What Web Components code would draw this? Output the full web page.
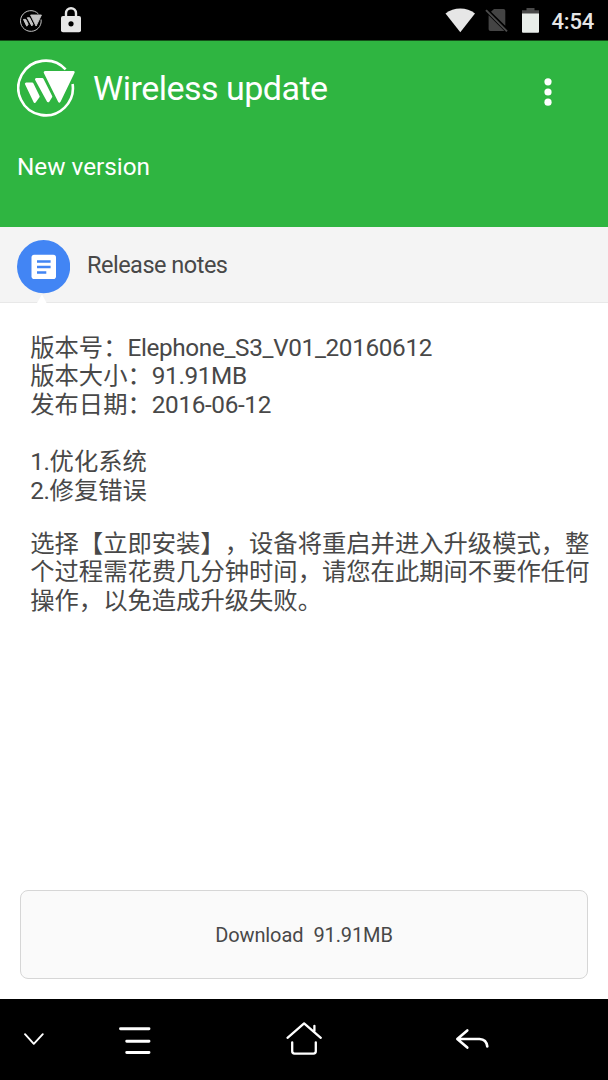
<!DOCTYPE html>
<html lang="en">
<head>
<meta charset="utf-8">
<title>Wireless update</title>
<style>
  html, body {
    margin: 0;
    height: 100%;
  }

  body {
    font-family: Roboto, "Noto Sans CJK SC", sans-serif;
    color: #484848;
    background: #fff;
    overflow: hidden;
  }

  .latin {
    letter-spacing: -0.35px;
  }
</style>
</head>
<body>
<update-screen>
  <status-bar slot="top" time="4:54"></status-bar>
  <app-header slot="top" title="Wireless update" subtitle="New version"></app-header>
  <section-header slot="top">Release notes</section-header>
  <release-notes>
    <p>版本号：<span class="latin">Elephone_S3_V01_20160612</span><br>版本大小：<span class="latin">91.91MB</span><br>发布日期：<span class="latin">2016-06-12</span><br><br><span class="latin">1.</span>优化系统<br><span class="latin">2.</span>修复错误</p>
    <p>选择【立即安装】，设备将重启并进入升级模式，整个过程需花费几分钟时间，请您在此期间不要作任何操作，以免造成升级失败。</p>
  </release-notes>
  <download-button slot="bottom" size="91.91MB">Download</download-button>
  <nav-bar slot="bottom"></nav-bar>
</update-screen>

<script>
const LOGO = `
  <path d="M48.6 10.4A27.3 27.3 0 1 0 55.6 25" fill="none" stroke="currentColor" stroke-width="2.6"/>
  <g fill="currentColor" stroke="currentColor" stroke-width="2.6" stroke-linejoin="round">
    <path d="M28 13.3H56.4L42.4 42.3Z"/>
    <path d="M19.3 20.4H25.3L34 37.6L31.2 42Z"/>
    <path d="M9.2 24.8H15.2L21.4 37.6L17.8 42.6Z"/>
  </g>`;

class UpdateScreen extends HTMLElement {
  constructor() {
    super();
    this.attachShadow({ mode: 'open' }).innerHTML = `
      <style>
        :host {
          display: flex;
          flex-direction: column;
          height: 1080px;
        }

        main {
          flex: 1;
          min-height: 0;
        }
      </style>
      <slot name="top"></slot>
      <main><slot></slot></main>
      <slot name="bottom"></slot>
    `;
  }
}

class StatusBar extends HTMLElement {
  constructor() {
    super();
    this.attachShadow({ mode: 'open' });
  }

  connectedCallback() {
    const time = this.getAttribute('time') || '';

    this.shadowRoot.innerHTML = `
      <style>
        :host {
          display: flex;
          align-items: center;
          box-sizing: border-box;
          height: 41px;
          padding: 0 14px 0 20px;
          background: #000;
          color: #e6e6e6;
          border-bottom: 1px solid #145019;
        }

        svg {
          display: block;
          flex: none;
        }

        .logo {
          margin-top: 2px;
          color: #c4c4c4;
        }

        .lock { margin: 0 auto 0 19px; }
        .sim { margin-left: 10px; }
        .battery { margin: 1px 0 0 14px; }

        time {
          margin: 3px 0 0 12px;
          font-size: 22px;
          font-weight: 500;
          line-height: 26px;
          letter-spacing: -0.2px;
        }
      </style>
      <svg class="logo" width="22" height="22" viewBox="0 0 58 58">${LOGO}</svg>
      <svg class="lock" width="20" height="26" viewBox="0 0 20 26">
        <path d="M5 10V6.2a5 5 0 0 1 10 0V10" fill="none" stroke="currentColor" stroke-width="2.4"/>
        <rect y="9" width="20" height="16.3" rx="2" fill="currentColor"/>
        <circle cx="10" cy="16.8" r="2.6" fill="#000"/>
      </svg>
      <svg width="30" height="25" viewBox="0 0 30 25">
        <path d="M.5 5.6Q7 .5 15.3 .5T30 5.6L15.3 24.3Z" fill="currentColor"/>
      </svg>
      <svg class="sim" width="23" height="24" viewBox="0 0 23 24">
        <path d="M9 1H18.5Q20.3 1 20.3 2.8V17.8L6 3.8ZM3.6 7.3L19.4 23H5.4Q3.6 23 3.6 21.2Z" fill="#444"/>
        <path d="M1 2.2L22 23.3" stroke="#4c4c4c" stroke-width="1.9"/>
      </svg>
      <svg class="battery" width="17" height="25" viewBox="0 0 17 25">
        <path d="M4.5 0h8v2.2H17V6H0V2.2h4.5Z" fill="#4a4a4a"/>
        <path d="M0 5.5h17V23.7Q17 24.7 16 24.7H1Q0 24.7 0 23.7Z" fill="#e9eeea"/>
      </svg>
      <time>${time}</time>
    `;
  }
}

class AppHeader extends HTMLElement {
  constructor() {
    super();
    this.attachShadow({ mode: 'open' });
  }

  connectedCallback() {
    const title = this.getAttribute('title') || '';
    const subtitle = this.getAttribute('subtitle') || '';

    this.shadowRoot.innerHTML = `
      <style>
        :host {
          display: block;
          box-sizing: border-box;
          height: 186px;
          padding: 17px 17px 0;
          background: #2fb541;
          color: #fff;
        }

        .bar {
          display: flex;
          align-items: center;
          height: 59px;
        }

        svg { display: block; }

        h1 {
          flex: 1;
          margin: 0 0 0 18px;
          font-size: 34px;
          font-weight: 400;
          line-height: 40px;
          letter-spacing: -0.5px;
        }

        .menu { margin: 9px 37px 0 0; }

        h2 {
          margin: 35px 0 0;
          font-size: 24.32px;
          font-weight: 400;
          line-height: 29px;
        }
      </style>
      <div class="bar">
        <svg width="58" height="58" viewBox="0 0 58 58">${LOGO}</svg>
        <h1>${title}</h1>
        <svg class="menu" width="12" height="30" viewBox="0 0 12 30" fill="currentColor">
          <circle cx="6" cy="4.8" r="3.6"/>
          <circle cx="6" cy="15" r="3.6"/>
          <circle cx="6" cy="25.2" r="3.6"/>
        </svg>
      </div>
      <h2>${subtitle}</h2>
    `;
  }
}

class SectionHeader extends HTMLElement {
  constructor() {
    super();
    this.attachShadow({ mode: 'open' }).innerHTML = `
      <style>
        :host {
          display: flex;
          align-items: center;
          position: relative;
          box-sizing: border-box;
          height: 76px;
          padding: 0 17px 0 16px;
          background: #f4f4f4;
          border-bottom: 1px solid #e8e8e8;
        }

        .badge {
          display: block;
          margin: 4px 17px 0 0;
        }

        span {
          font-size: 23.5px;
          line-height: 28px;
          letter-spacing: -0.5px;
        }

        /* notch pointing from the notes to the badge */
        .notch {
          position: absolute;
          left: 36px;
          bottom: -1px;
        }
      </style>
      <svg class="badge" width="54" height="54" viewBox="0 0 54 54">
        <circle cx="27.6" cy="26.7" r="26.6" fill="#4285f4"/>
        <rect x="15.5" y="14.8" width="24.5" height="24.3" rx="2.8" fill="#fff"/>
        <path d="M21 21.6H34.6M21 27H34.6M21 32.5H30.3" stroke="#4285f4" stroke-width="2.5"/>
      </svg>
      <span><slot></slot></span>
      <svg class="notch" width="12" height="9" viewBox="0 0 12 9">
        <path d="M1 9L6 .5L10.6 9Z" fill="#fff"/>
      </svg>
    `;
  }
}

class ReleaseNotes extends HTMLElement {
  constructor() {
    super();
    this.attachShadow({ mode: 'open' }).innerHTML = `
      <style>
        :host {
          display: block;
          padding: 30.7px 0 0 30.2px;
          font-size: 24.32px;
          line-height: 28.65px;
        }

        ::slotted(p) {
          width: 565px;
          margin: 0 0 24px;
          text-spacing-trim: space-all;
        }
      </style>
      <slot></slot>
    `;
  }
}

class DownloadButton extends HTMLElement {
  constructor() {
    super();
    this.attachShadow({ mode: 'open' });
  }

  connectedCallback() {
    const size = this.getAttribute('size') || '';

    this.shadowRoot.innerHTML = `
      <style>
        :host {
          display: block;
          padding: 0 20px 20px;
        }

        button {
          display: flex;
          align-items: center;
          justify-content: center;
          gap: 10px;
          box-sizing: border-box;
          width: 100%;
          height: 89px;
          padding: 1px 0 0;
          font: 20px/24px Roboto, sans-serif;
          letter-spacing: -0.1px;
          color: #484848;
          background: #fafafa;
          border: 1px solid #d6d6d6;
          border-radius: 8px;
        }
      </style>
      <button><span><slot></slot></span><span>${size}</span></button>
    `;
  }
}

class NavBar extends HTMLElement {
  constructor() {
    super();
    this.attachShadow({ mode: 'open' }).innerHTML = `
      <style>
        :host {
          display: flex;
          align-items: center;
          box-sizing: border-box;
          height: 81px;
          padding: 0 0 1px 23px;
          background: #000;
        }

        svg {
          display: block;
          fill: none;
          stroke: #fff;
          stroke-width: 2.3;
          stroke-linecap: round;
          stroke-linejoin: round;
        }

        .recent { margin-left: 74px; }
        .home { margin-left: 134px; }
        .back { margin-left: 132px; }
      </style>
      <svg width="22" height="40" viewBox="0 0 22 40">
        <path d="M2 15.2L10.8 24.8L19.8 15.2" stroke-width="1.9"/>
      </svg>
      <svg class="recent" width="32" height="40" viewBox="0 0 32 40">
        <path d="M1.5 9.7H30M7.7 22.2H30M7.7 33.5H30" stroke-width="2.9"/>
      </svg>
      <svg class="home" width="38" height="40" viewBox="0 0 38 40">
        <path d="M2.5 18.8L19.1 4.4L35.8 18.8M29.4 6.8V12"/>
        <path d="M7.2 23.3V32.3Q7.2 34.6 9.5 34.6H28.5Q30.8 34.6 30.8 32.3V23.3"/>
      </svg>
      <svg class="back" width="36" height="40" viewBox="0 0 36 40">
        <path d="M12.3 11.4L2.3 20L12.3 28.6M2.8 20H24.5Q31.5 20.3 32.3 27.5" stroke-width="2.6"/>
      </svg>
    `;
  }
}

customElements.define('update-screen', UpdateScreen);
customElements.define('status-bar', StatusBar);
customElements.define('app-header', AppHeader);
customElements.define('section-header', SectionHeader);
customElements.define('release-notes', ReleaseNotes);
customElements.define('download-button', DownloadButton);
customElements.define('nav-bar', NavBar);
</script>
</body>
</html>
